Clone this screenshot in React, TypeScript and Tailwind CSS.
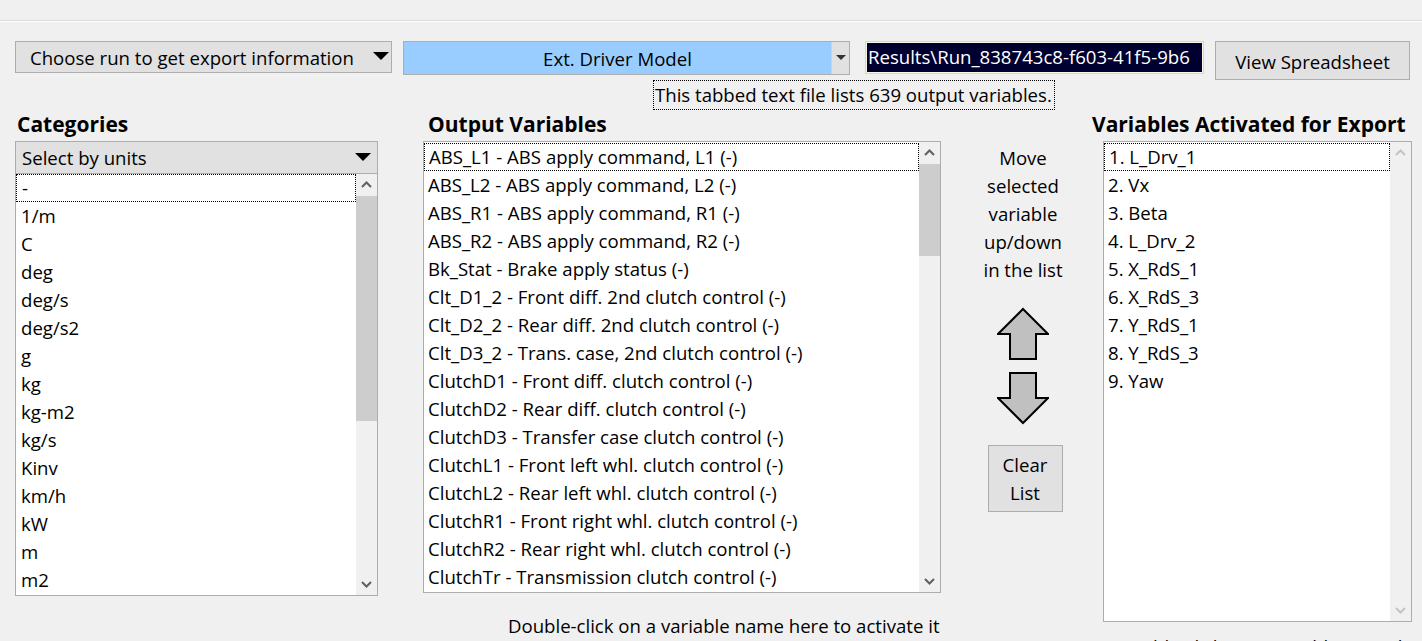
import React from "react";

const categories = ["-", "1/m", "C", "deg", "deg/s", "deg/s2", "g", "kg", "kg-m2", "kg/s", "Kinv", "km/h", "kW", "m", "m2"];
const outputs = [
  "ABS_L1 - ABS apply command, L1 (-)",
  "ABS_L2 - ABS apply command, L2 (-)",
  "ABS_R1 - ABS apply command, R1 (-)",
  "ABS_R2 - ABS apply command, R2 (-)",
  "Bk_Stat - Brake apply status (-)",
  "Clt_D1_2 - Front diff. 2nd clutch control (-)",
  "Clt_D2_2 - Rear diff. 2nd clutch control (-)",
  "Clt_D3_2 - Trans. case, 2nd clutch control (-)",
  "ClutchD1 - Front diff. clutch control (-)",
  "ClutchD2 - Rear diff. clutch control (-)",
  "ClutchD3 - Transfer case clutch control (-)",
  "ClutchL1 - Front left whl. clutch control (-)",
  "ClutchL2 - Rear left whl. clutch control (-)",
  "ClutchR1 - Front right whl. clutch control (-)",
  "ClutchR2 - Rear right whl. clutch control (-)",
  "ClutchTr - Transmission clutch control (-)",
];
const activated = ["1. L_Drv_1", "2. Vx", "3. Beta", "4. L_Drv_2", "5. X_RdS_1", "6. X_RdS_3", "7. Y_RdS_1", "8. Y_RdS_3", "9. Yaw"];

function Chevron({ up, color }: { up: boolean; color: string }) {
  return (
    <svg width="11" height="7" viewBox="0 0 11 7">
      {up ? (
        <polyline points="1,6 5.5,1.5 10,6" fill="none" stroke={color} strokeWidth="2" />
      ) : (
        <polyline points="1,1 5.5,5.5 10,1" fill="none" stroke={color} strokeWidth="2" />
      )}
    </svg>
  );
}

function Scrollbar({ thumbTop, thumbHeight, disabled }: { thumbTop?: number; thumbHeight?: number; disabled?: boolean }) {
  const c = disabled ? "#c4c4c4" : "#606060";
  return (
    <div className="relative w-[21px] shrink-0 bg-[#f0f0f0] h-full">
      <div className="absolute left-0 top-0 w-[21px] h-[21px] flex items-center justify-center">
        <Chevron up color={c} />
      </div>
      {thumbHeight ? (
        <div className="absolute left-0 w-[21px] bg-[#cdcdcd]" style={{ top: thumbTop, height: thumbHeight }} />
      ) : null}
      <div className="absolute left-0 bottom-0 w-[21px] h-[21px] flex items-center justify-center">
        <Chevron up={false} color={c} />
      </div>
    </div>
  );
}

export default function App() {
  return (
    <div className="w-[1422px] h-[641px] overflow-hidden bg-[#f0f0f0] text-black text-[18.6px] font-['Segoe_UI','Open_Sans',sans-serif]">
      <div className="h-[20px]" />
      <div className="h-px bg-[#dadada]" />
      <div className="h-px bg-white" />

      {/* Top row */}
      <div className="flex items-start pt-[19px]">
        <div className="ml-[15px] w-[377px] h-[32px] bg-[#e1e1e1] border border-[#adadad] flex items-center pl-[14px] pr-[2px] pt-[3px]">
          <span className="flex-1 leading-none whitespace-nowrap">Choose run to get export information</span>
          <svg width="16" height="9" viewBox="0 0 16 9" className="-mt-[5px]">
            <polygon points="0,0 16,0 8,8" fill="#000" />
          </svg>
        </div>
        <div className="ml-[11px] w-[447px] h-[34px] border border-[#adadad] flex">
          <div className="flex-1 bg-[#99ccff] flex items-center justify-center leading-none pt-[3px]">Ext. Driver Model</div>
          <div className="w-px bg-[#bcd8f2]" />
          <div className="w-[17px] bg-[#e1e1e1] flex items-center justify-center">
            <svg width="10" height="6" viewBox="0 0 10 6">
              <polygon points="0,0 10,0 5,5" fill="#333" />
            </svg>
          </div>
        </div>
        <div className="ml-[15px] w-[339px] h-[33px] border border-[#bcdcf4] p-px bg-[#f7f7e6]">
          <div className="w-full h-full bg-[#000030] text-white flex items-center pl-[1px] leading-none whitespace-nowrap overflow-hidden">
            Results\Run_838743c8-f603-41f5-9b6
          </div>
        </div>
        <div className="ml-[11px] w-[195px] h-[39px] bg-[#e1e1e1] border border-[#adadad] flex items-center justify-center pt-[4px] leading-none whitespace-nowrap">
          View Spreadsheet
        </div>
      </div>

      {/* Info label */}
      <div className="ml-[653px] w-[402px] h-[30px] border border-dotted border-black flex items-center pl-[1px] leading-none whitespace-nowrap">
        This tabbed text file lists 639 output variables.
      </div>

      {/* Columns */}
      <div className="flex items-start mt-[2px]">
        {/* Categories */}
        <div className="ml-[15px] w-[363px] flex flex-col">
          <div className="h-[29px] leading-[24px] text-[21px] font-bold pl-[2px] whitespace-nowrap">Categories</div>
          <div className="h-[33px] bg-[#e1e1e1] border border-[#adadad] flex items-center pl-[6px] pr-[6px]">
            <span className="flex-1 leading-none pt-[2px]">Select by units</span>
            <svg width="16" height="9" viewBox="0 0 16 9">
              <polygon points="0,0 16,0 8,8" fill="#000" />
            </svg>
          </div>
          <div className="h-[422px] border border-t-0 border-[#adadad] bg-white flex">
            <div className="flex-1 flex flex-col overflow-hidden">
              {categories.map((c, i) => (
                <div
                  key={c}
                  className={`h-[28px] shrink-0 flex items-center pl-[5px] leading-none ${i === 0 ? "border border-dotted border-black pl-[4px]" : ""}`}
                >
                  {c}
                </div>
              ))}
            </div>
            <Scrollbar thumbTop={22} thumbHeight={225} />
          </div>
        </div>

        {/* Output Variables */}
        <div className="ml-[45px] w-[518px] flex flex-col">
          <div className="h-[29px] leading-[24px] text-[21px] font-bold pl-[5px] whitespace-nowrap">Output Variables</div>
          <div className="h-[452px] border border-[#adadad] bg-white flex">
            <div className="flex-1 flex flex-col overflow-hidden pt-px">
              {outputs.map((o, i) => (
                <div
                  key={o}
                  className={`h-[28px] shrink-0 flex items-center pl-[4px] leading-none whitespace-nowrap ${i === 0 ? "border border-dotted border-black pl-[3px]" : ""}`}
                >
                  {o}
                </div>
              ))}
            </div>
            <Scrollbar thumbTop={22} thumbHeight={92} />
          </div>
          <div className="mt-[19px] h-[28px] leading-[28px] pl-[85px] whitespace-nowrap">
            Double-click on a variable name here to activate it
          </div>
        </div>

        {/* Middle controls */}
        <div className="ml-[40px] w-[84px] flex flex-col items-center pt-[32px]">
          <div className="text-center leading-[28px] whitespace-nowrap">
            <div>Move</div>
            <div>selected</div>
            <div>variable</div>
            <div>up/down</div>
            <div>in the list</div>
          </div>
          <svg width="52" height="118" viewBox="0 0 52 118" className="mt-[23px]">
            <polygon points="26,2 51,27 39,27 39,52 13,52 13,27 1,27" fill="#c0c0c0" stroke="#000" strokeWidth="2" strokeLinejoin="miter" />
            <polygon points="13,66 39,66 39,91 51,91 26,116 1,91 13,91" fill="#c0c0c0" stroke="#000" strokeWidth="2" strokeLinejoin="miter" />
          </svg>
          <div className="mt-[20px] ml-[4px] w-[75px] h-[67px] bg-[#e1e1e1] border border-[#adadad] flex flex-col items-center justify-center leading-[28px]">
            <div>Clear</div>
            <div>List</div>
          </div>
        </div>

        {/* Activated */}
        <div className="ml-[27px] w-[320px] flex flex-col">
          <div className="h-[29px] leading-[24px] text-[21px] font-bold whitespace-nowrap">Variables Activated for Export</div>
          <div className="ml-[11px] w-[309px] h-[481px] border border-[#adadad] bg-white flex">
            <div className="flex-1 flex flex-col overflow-hidden pt-px">
              {activated.map((a, i) => (
                <div
                  key={a}
                  className={`h-[28px] shrink-0 flex items-center pl-[4px] leading-none ${i === 0 ? "border border-dotted border-black pl-[3px]" : ""}`}
                >
                  {a}
                </div>
              ))}
            </div>
            <Scrollbar disabled />
          </div>
          <div className="mt-[11px] h-[28px] leading-[28px] pl-[25px] whitespace-nowrap">
            Double-click on a variable name here to deactivate it
          </div>
        </div>
      </div>
    </div>
  );
}
